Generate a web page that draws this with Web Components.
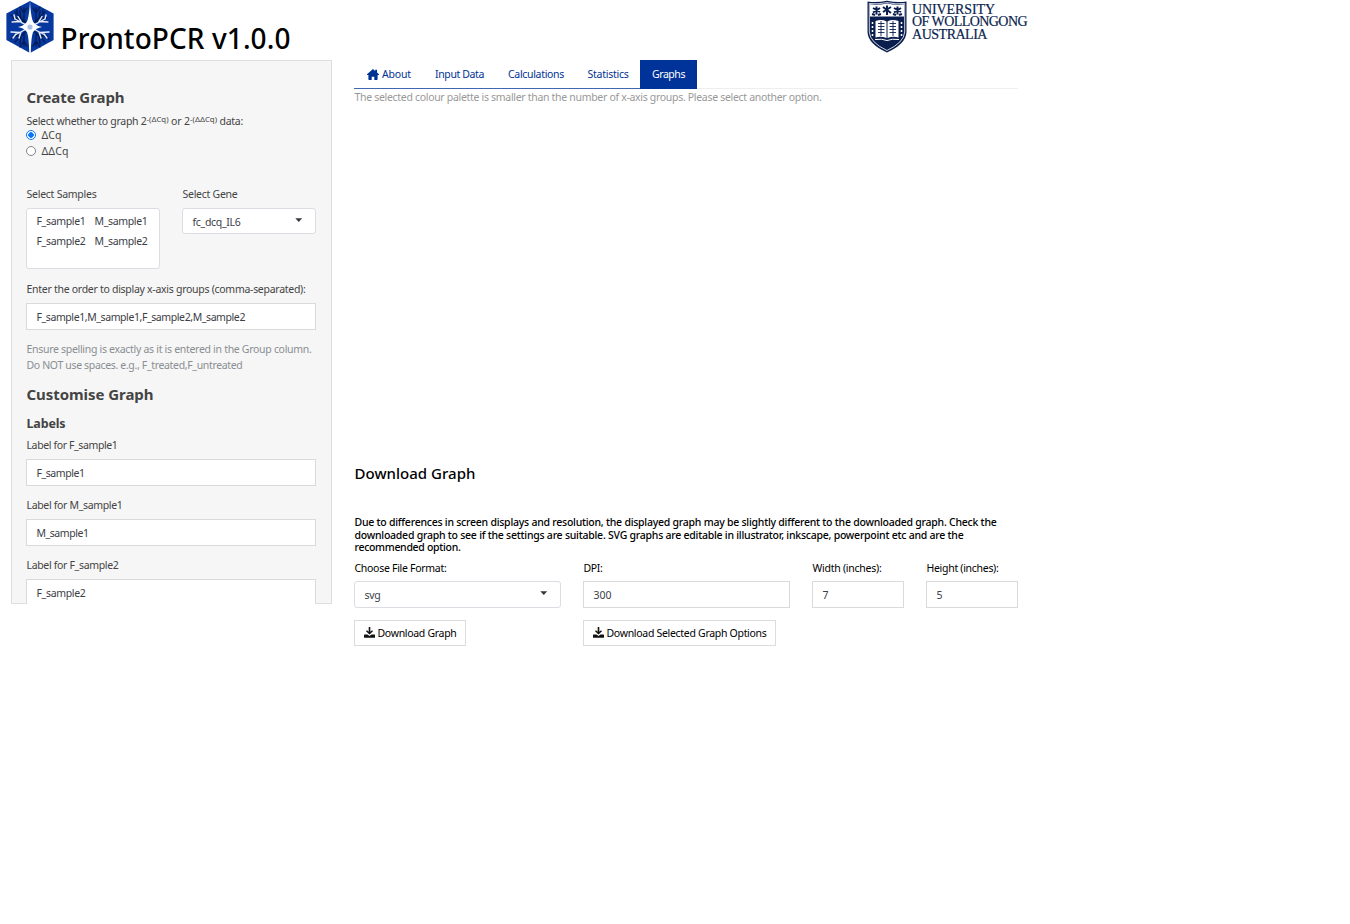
<!DOCTYPE html>
<html lang="en"><head><meta charset="utf-8"><title>ProntoPCR</title>
<style>
body{margin:0;background:#fff;color:#000;font:10.5px/16px "Noto Sans","Open Sans",sans-serif;height:924px;overflow:hidden}
</style></head><body>
<pcr-app></pcr-app>
<script>
const define=(name,css,html,init)=>customElements.define(name,class extends HTMLElement{
  connectedCallback(){
    if(this.shadowRoot)return;
    const a=n=>this.getAttribute(n)||'';
    this.attachShadow({mode:'open'}).innerHTML=`<style>*{box-sizing:border-box}${css}</style>`+(typeof html==='function'?html(a):html);
    if(init)init(this);
  }
});

/* One line of text, tracked so that it fills its given width */
define('fit-text',':host{display:inline-block;white-space:nowrap;vertical-align:top}span{display:inline-block;vertical-align:top}','<span><slot></slot></span>',el=>{
  const s=el.shadowRoot.querySelector('span'),w=+el.getAttribute('w'),n=el.textContent.length;
  if(!w)return;
  s.style.letterSpacing=(w-s.getBoundingClientRect().width)/n+'px';
  el.style.width=w+'px';
});

define('hex-logo',':host{display:block;width:48px;height:52px}svg{display:block}',`
<svg width="48" height="52" viewBox="0 0 48 52" fill="none" stroke-linecap="round">
<path d="M24 0L47.6 12.6V39L24 52L.4 39V12.6Z" fill="#07389f"/>
<path stroke="#041b55" stroke-width="1.3" d="M21 23L9 11M15 17L14 10M15 17L7 17M18 20L18 7M18 12L14 6M11 13V9M19 20L5 21M12 19L5 14M18 12L21 7M27 23L39 11M33 17L34 10M33 17L41 17M30 20L30 7M30 12L34 6M37 13V9M29 20L43 21M30 12L27 7M21 29L9 41M15 35L14 43M15 35L7 35M18 32L18 45M18 40L14 46M12 33L5 38M18 40L21 45M27 29L39 41M33 35L34 43M33 35L41 35M30 32L30 45M30 40L34 46M36 33L43 38M30 40L27 45"/>
<g stroke="#e9effb" stroke-width="1.4"><path d="M24 26L9 18M14 20.500L6 21M16 22L12 15.500M24 26L9 34M14 31.500L5 31M15 31L13 37M10 33L7 37M24 26L39 18M34 20.500L42 21M32 22L36 15.500M39 18L40 14M24 26L39 34M34 31.500L43 31M33 31L35 37M38 33L41 37M9 18L8 14"/></g>
<path d="M24 0Q25 19 28 22Q31 25 36 26Q30 27 27 31Q25 37 24.800 52H23.200Q23 37 21 31Q18 27 12 26Q17 25 20 22Q23 19 24 0Z" fill="#fff"/>
<circle cx="24" cy="26" r="5.500" fill="#fff"/><circle cx="24" cy="26" r="2.600" fill="#a9bfe8"/></svg>`);

define('uow-logo',`:host{display:flex;gap:5px;color:#0b1f4f;font:14px/12.300px "Liberation Serif",serif}svg{display:block;flex:none}.t{padding-top:4px;display:flex;flex-direction:column;-webkit-text-stroke:.2px #0b1f4f}`,`
<svg width="40" height="53" viewBox="0 0 40 53"><path d="M.5 1.500Q10 3 20 .8Q30 3 39.500 1.500V32Q39 44 20 52.500Q1 44 .5 32Z" fill="#0b1f4f"/>
<path d="M2.300 3.500Q11 4.600 20 2.600Q29 4.600 37.700 3.500V32Q37 42.500 20 50.500Q3 42.500 2.300 32Z" fill="none" stroke="#fff" stroke-width=".8"/>
<path d="M3 4.300Q11 5.300 20 3.400Q29 5.300 37 4.300V16.500H3Z" fill="#fff"/>
<g fill="none" stroke="#0b1f4f" stroke-width="2"><path d="M6 8L13 12M9.500 6.500V14.500M6 12.500L13 8M5 14L8 15M14 14L11 15M16 7L24 13M20 5.500V15M16 12L24 7M27 8L34 12M30.500 6.500V14.500M27 12.500L34 8M26 14L29 15M35 14L32 15"/></g>
<path d="M8.500 21Q15 19 19.500 21.500V38Q14 36 8.500 37.500ZM20.500 21.500Q25 19 31.500 21V37.500Q26 36 20.500 38Z" fill="#fff"/>
<g stroke="#0b1f4f" stroke-width=".9"><path d="M11 23.500H17.500M11 26.500H17.500M11 29.500H17.500M11 32.500H17.500M22.500 23.500H29M22.500 26.500H29M22.500 29.500H29M22.500 32.500H29M14 21V36M26 21V36"/></g>
<path d="M5.500 22V37M34.500 22V37" stroke="#fff" stroke-width="1.500" stroke-dasharray="2 2"/><path d="M8 39.500Q15 38.500 20 40.500Q25 38.500 32 39.500" fill="none" stroke="#fff" stroke-width="1"/></svg>
<div class="t"><fit-text w="83">UNIVERSITY</fit-text><fit-text w="115">OF WOLLONGONG</fit-text><fit-text w="75">AUSTRALIA</fit-text></div>`);

define('app-header',`:host{display:flex;justify-content:space-between;align-items:flex-start;height:60px;width:1027px;padding-left:6px;box-sizing:border-box}
.b{display:flex;gap:6.500px}hex-logo{margin-top:1px}.n{font:500 28px/40px "Noto Sans","Open Sans",sans-serif;margin-top:18px}`,
`<div class="b"><hex-logo></hex-logo><fit-text class="n" w="230">ProntoPCR v1.0.0</fit-text></div><uow-logo></uow-logo>`);

define('input-box',`:host{display:flex;align-items:center;box-sizing:border-box;height:27px;padding:1px 9px 0 9.500px;border:1px solid #d9dadd;background:#fff;color:#3c4046}
:host([select]){border-radius:3px;border-color:#dcdde2;height:var(--select-h,27px)}fit-text{flex:none}svg{display:block;margin:-3px 3px 0 auto}`,
a=>`<fit-text w="${a('w')}">${a('value')}</fit-text>${a('select')?'<svg width="8" height="4" viewBox="0 0 8 4"><path d="M.3 .3H7.200L3.750 4Z" fill="#343a40"/></svg>':''}`);

define('form-field',`:host{display:block}.l{display:block;height:var(--label-h,22px);padding-left:.5px}`,
a=>`<fit-text class="l" w="${a('lw')}">${a('label')}</fit-text><input-box value="${a('value')}" w="${a('w')}" ${a('select')?'select="1"':''}></input-box>`);

define('radio-option',`:host{display:flex;align-items:center;height:16px;gap:5.500px}
b{width:10px;height:10px;border-radius:50%;border:1px solid #858585;background:#fff;box-sizing:border-box}
:host([on]) b{border-color:#0b76f5;background:radial-gradient(circle,#0b76f5 2.500px,#fff 3px)}`,`<b></b><slot></slot>`);

define('side-panel',`:host{display:block;width:321px;height:544px;overflow:hidden;box-sizing:border-box;background:#f6f6f6;box-shadow:inset 0 0 0 1px #dedede;padding:25px 16px 0 15px;color:#444}
h3,h4{margin:0;font-weight:700;padding-left:.5px}h3{font-size:15px;line-height:24px}h4{font-size:12.500px;line-height:18px}
.q{height:14px;margin-top:4px;display:flex;padding-left:.5px}.q sup{font-size:7.800px;line-height:12px;display:block}
.c{display:grid;grid-template-columns:134px 134px;gap:22px;margin-top:27px;--select-h:26px}
.c>div>fit-text{display:block;height:22px;padding-left:.5px}.m{height:61px;background:#fff;border:1px solid #dcdde2;border-radius:3px;padding:3px 9px 0 9.500px;display:grid;grid-template-columns:58px 58px;grid-auto-rows:20px;align-content:start;line-height:18px;color:#3c4046}
.h{margin-top:11px;color:#8a8e93;padding-left:.5px}.f1{margin-top:12px}.f{margin-top:11px}`,`
<h3><fit-text w="98">Create Graph</fit-text></h3>
<div class="q"><fit-text w="120">Select whether to graph 2</fit-text><sup><fit-text w="22">-(ΔCq)</fit-text></sup><fit-text w="21.5">&nbsp;or 2</fit-text><sup><fit-text w="27">-(ΔΔCq)</fit-text></sup><fit-text w="26">&nbsp;data:</fit-text></div>
<div><radio-option on><fit-text w="20">ΔCq</fit-text></radio-option><radio-option><fit-text w="27">ΔΔCq</fit-text></radio-option></div>
<div class="c"><div><fit-text w="70">Select Samples</fit-text><div class="m"><fit-text w="49">F_sample1</fit-text><fit-text w="53">M_sample1</fit-text><fit-text w="49">F_sample2</fit-text><fit-text w="53">M_sample2</fit-text></div></div>
<form-field label="Select Gene" lw="55" value="fc_dcq_IL6" w="48" select="1"></form-field></div>
<form-field class="f1" label="Enter the order to display x-axis groups (comma-separated):" lw="279" value="F_sample1,M_sample1,F_sample2,M_sample2" w="208.5"></form-field>
<div class="h"><fit-text w="285">Ensure spelling is exactly as it is entered in the Group column.</fit-text><br><fit-text w="216">Do NOT use spaces. e.g., F_treated,F_untreated</fit-text></div>
<h3 style="margin-top:9px"><fit-text w="127">Customise Graph</fit-text></h3><h4 style="margin-top:9px"><fit-text w="39">Labels</fit-text></h4>
<form-field style="margin-top:4px" label="Label for F_sample1" lw="91" value="F_sample1" w="48"></form-field>
<form-field class="f" label="Label for M_sample1" lw="96" value="M_sample1" w="52"></form-field>
<form-field class="f" label="Label for F_sample2" lw="92" value="F_sample2" w="49"></form-field>`);

define('nav-tab',`:host{display:flex;align-items:center;justify-content:center;gap:3px;height:29px;box-sizing:border-box;color:#003294;border-bottom:1px solid #4266b1}
:host([active]){background:#003399;color:#fff;border-color:#003399}`,`<slot></slot>`);
define('nav-tabs',`:host{display:grid;grid-template-columns:69px 73px 80px 64px 57px 1fr;height:29px}.e{border-bottom:1px solid #eee}svg{display:block;margin-left:1px}`,`
<nav-tab><svg width="12" height="11" viewBox="0 0 12 11" fill="#003294"><path d="M6 0L8.200 1.900V.8H10V3.500L12 5.300V6H10.600V10.300Q10.600 11 9.900 11H7.300V7.700H4.700V11H2.100Q1.400 11 1.400 10.300V6H0V5.300Z"/></svg><fit-text w="29">About</fit-text></nav-tab>
<nav-tab><fit-text w="49">Input Data</fit-text></nav-tab><nav-tab><fit-text w="56">Calculations</fit-text></nav-tab><nav-tab><fit-text w="41">Statistics</fit-text></nav-tab><nav-tab active><fit-text w="33">Graphs</fit-text></nav-tab><div class="e"></div>`);

define('download-button',`:host{display:inline-flex;align-items:center;gap:2.500px;height:26px;padding:0 8.500px 0 9px;border:1px solid #dcdcdf;box-sizing:border-box;vertical-align:top;background:#fff}svg{display:block}`,
a=>`<svg width="11" height="11" viewBox="0 0 11 11" fill="#111"><path d="M4.700 0H6.300V4.700L8 3.200L9 4.200L5.500 7.600L2 4.200L3 3.200L4.700 4.700ZM.6 7.500H3.500L5.500 9L7.500 7.500H10.400Q11 7.500 11 8.100V10.200Q11 10.800 10.400 10.800H.6Q0 10.800 0 10.200V8.100Q0 7.500 .6 7.500Z"/></svg><fit-text w="${a('w')}">${a('label')}</fit-text>`);

define('graph-panel',`:host{display:block;width:664px;--label-h:21px}.m{color:#999;height:367px;padding-left:.5px}.m fit-text{line-height:17px}
h3{margin:0;font-weight:500;font-size:15px;line-height:34px;height:60px;padding-left:.5px}
p{margin:0 0 6px;font-weight:500;font-size:10.500px;line-height:12.600px;padding-left:.5px}p fit-text{display:block}
.g{display:grid;grid-template-columns:207px 207px 92px 92px;column-gap:22px;row-gap:12px}.g download-button{justify-self:start}`,`
<nav-tabs></nav-tabs><div class="m"><fit-text w="467">The selected colour palette is smaller than the number of x-axis groups. Please select another option.</fit-text></div>
<h3><fit-text w="121">Download Graph</fit-text></h3>
<p><fit-text w="642">Due to differences in screen displays and resolution, the displayed graph may be slightly different to the downloaded graph. Check the</fit-text><fit-text w="609">downloaded graph to see if the settings are suitable. SVG graphs are editable in illustrator, inkscape, powerpoint etc and are the</fit-text><fit-text w="106">recommended option.</fit-text></p>
<div class="g"><form-field label="Choose File Format:" lw="92" value="svg" w="16" select="1"></form-field><form-field label="DPI:" lw="19" value="300" w="18"></form-field><form-field label="Width (inches):" lw="69" value="7" w="6"></form-field><form-field label="Height (inches):" lw="72" value="5" w="6"></form-field>
<download-button label="Download Graph" w="79"></download-button><download-button label="Download Selected Graph Options" w="160"></download-button></div>`);

define('pcr-app',`:host{display:block}main{display:flex;align-items:flex-start;gap:22px;padding-left:11px}`,`<app-header></app-header><main><side-panel></side-panel><graph-panel></graph-panel></main>`);
</script></body></html>
